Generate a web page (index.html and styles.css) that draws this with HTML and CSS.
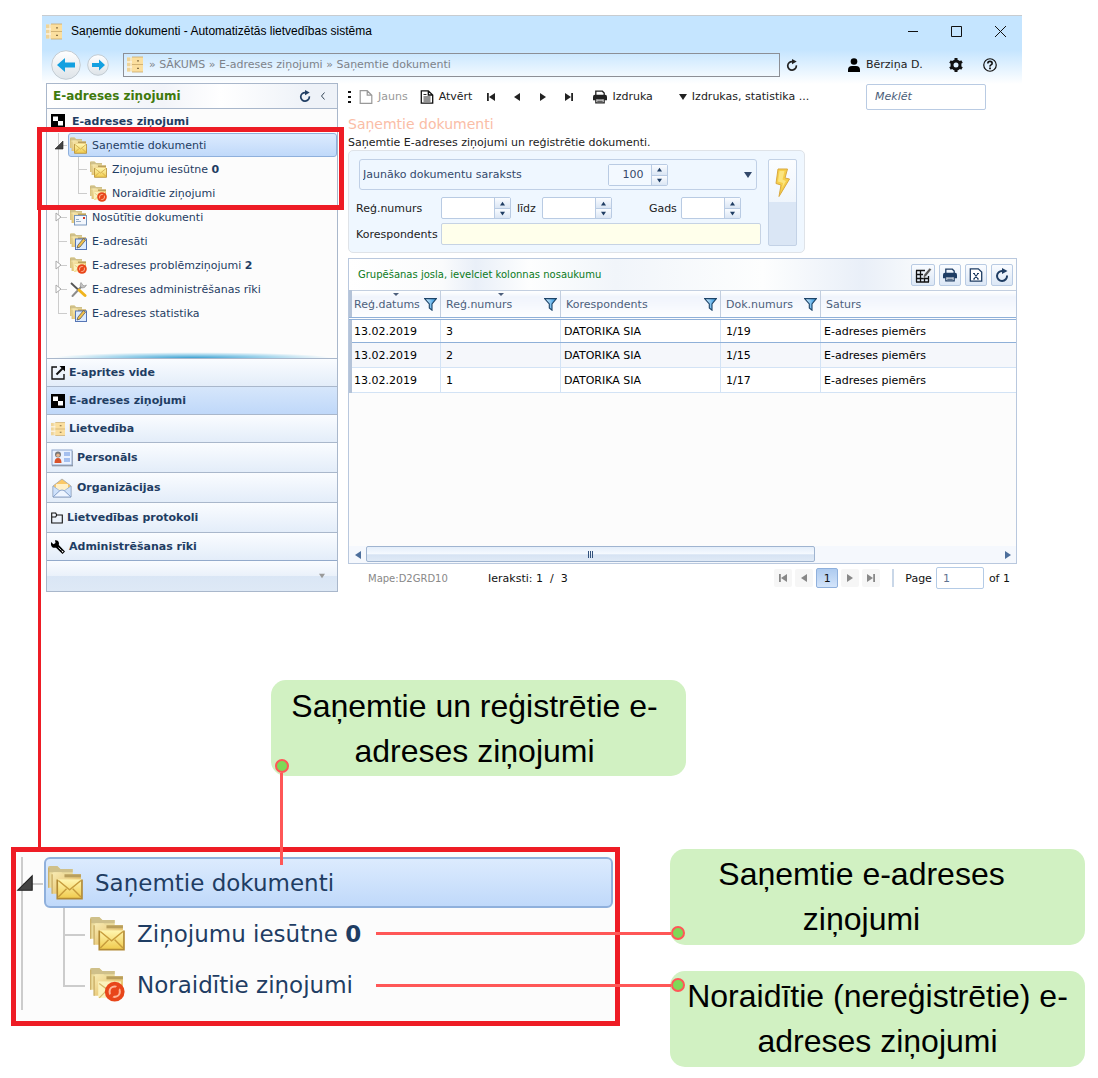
FILE: index.html
```html
<!DOCTYPE html>
<html lang="lv">
<head>
  <meta charset="UTF-8">
  <title>Saņemtie dokumenti - Automatizētās lietvedības sistēma</title>
  <link rel="stylesheet" href="styles.css">
</head>
<body>

<svg class="sprite" aria-hidden="true">
  <defs>
    <linearGradient id="gold" x1="0" y1="0" x2="1" y2="1">
      <stop offset="0" stop-color="#f8ebb4"/><stop offset="1" stop-color="#e0b452"/>
    </linearGradient>
    <linearGradient id="mail" x1="0" y1="0" x2="0" y2="1">
      <stop offset="0" stop-color="#fff6b0"/><stop offset="1" stop-color="#f0ca4c"/>
    </linearGradient>
    <linearGradient id="blue" x1="0" y1="0" x2="1" y2="0">
      <stop offset="0" stop-color="#e6f6ff"/><stop offset="1" stop-color="#1f8fe0"/>
    </linearGradient>
    <linearGradient id="disc" x1="0" y1="0" x2="0" y2="1">
      <stop offset="0" stop-color="#ffffff"/><stop offset="1" stop-color="#dde3e8"/>
    </linearGradient>
  </defs>
  <symbol id="i-cabinet" viewBox="0 0 16 16">
    <path d="M0 1h6v14H0z" fill="#f6e6bf"/>
    <path d="M0 1h3v4H0zM0 6h3v4H0zM0 11h3v4H0z" fill="#eed49a"/>
    <path d="M5 .5h11v15H5z" fill="#fbdf9f"/>
    <path d="M0 5.500h5M0 10.500h5" stroke="#fffaf0"/>
    <path d="M5 .5h11M5 8h11M5 15.500h11" stroke="#c9a76a" stroke-width=".8"/>
    <path d="M10 4.300h2M10 11.800h2" stroke="#8a7346" stroke-width="1.200"/>
  </symbol>
  <symbol id="i-folder" viewBox="0 0 17 17">
    <path d="M0 1.500Q0 .5 1 .5h3.500L6 2h6v9H0z" fill="#ecdc9c"/>
    <path d="M0 2.500v-1Q0 .5 1 .5h3.500L6 2h6v1.500H0z" fill="#cfc08a"/>
    <path d="M2 4.500q0-1 1-1h3.500l1 1H16V14H2z" fill="url(#gold)"/>
    <path d="M8 4.500h8V6H8z" fill="#b99f5c"/>
    <path d="M.3 11V1.500M2 14V4.500" stroke="#cdb26a" stroke-width=".7"/>
  </symbol>
  <symbol id="i-folder-mail" viewBox="0 0 17 17">
    <use href="#i-folder"/>
    <rect x="4.500" y="7" width="12" height="9.300" fill="url(#mail)"/>
    <path d="M4.500 7v9.300h12V7" fill="none" stroke="#b28a35" stroke-width=".8"/>
    <path d="M5 7.500l5.500 4.500 5.500-4.500M5 15.500l4-4M16 15.500l-4-4" fill="none" stroke="#c79c3c" stroke-width=".7"/>
  </symbol>
  <symbol id="i-folder-block" viewBox="0 0 17 17">
    <use href="#i-folder"/>
    <path d="M4 7h11v8H4z" fill="#fbf2bd"/>
    <path d="M4.500 8l4 3-4 4" fill="none" stroke="#d5b768" stroke-width=".6"/>
    <circle cx="12" cy="12" r="4.800" fill="#e8461a"/>
    <circle cx="12" cy="12" r="2.500" fill="none" stroke="#ffb596" stroke-width="1"/>
    <path d="M14 9.500L10 14.500" stroke="#e8461a" stroke-width="1.800"/>
  </symbol>
  <symbol id="i-folder-sent" viewBox="0 0 17 17">
    <use href="#i-folder"/>
    <rect x="4.500" y="6.500" width="12" height="9.500" fill="#f3f7fd" stroke="#6f8fb8" stroke-width=".9"/>
    <path d="M6 12.500h5M6 10.500h3" stroke="#8099b8" stroke-width=".8"/>
    <rect x="13" y="8" width="2" height="2" fill="#cf3a2a"/>
  </symbol>
  <symbol id="i-folder-edit" viewBox="0 0 17 17">
    <use href="#i-folder"/>
    <rect x="5.500" y="6" width="11" height="10.500" fill="#dcebff" stroke="#5575b5" stroke-width="1"/>
    <path d="M7 15l1-3 5.500-6.500 2 1.700L10 14z" fill="#f3c14a" stroke="#5b5b5b" stroke-width=".8"/>
  </symbol>
  <symbol id="i-tools" viewBox="0 0 17 17">
    <path d="M2.500 15L12 5" stroke="#8d8d8d" stroke-width="2" stroke-linecap="round"/>
    <path d="M11 1.500q-2 4 1 5.500 3 .5 4.500-3l-2.500 1-1.500-1.500z" fill="#c2c2c2" stroke="#8a8a8a" stroke-width=".6"/>
    <path d="M1 2l7 6.500" stroke="#555" stroke-width="1.800"/>
    <path d="M9 9l6 5.500" stroke="#f0b41e" stroke-width="3" stroke-linecap="round"/>
  </symbol>
  <symbol id="i-squares" viewBox="0 0 14 14">
    <path d="M0 0h14v14H0z"/>
    <path d="M2 2.500h5v4.500H2zM7 7h5v4.500H7z" fill="#fff"/>
  </symbol>
  <symbol id="i-refresh" viewBox="0 0 14 14">
    <path d="M12 7.500A5 5 0 1 1 7.500 3" fill="none" stroke="currentColor" stroke-width="2"/>
    <path d="M7 0l5.500 3L7 6z" fill="currentColor"/>
  </symbol>
  <symbol id="i-out" viewBox="0 0 14 14">
    <path d="M6 1H1v12h12V8" fill="none" stroke="#111" stroke-width="1.400"/>
    <path d="M8.500 0H14v5.500z"/><path d="M5.500 8.500L12 2" stroke="#111" stroke-width="2"/>
  </symbol>
  <symbol id="i-card" viewBox="0 0 22 18">
    <rect x="1" y="1" width="20" height="15" fill="#eaf2ff" stroke="#8ea6cc"/>
    <path d="M1 16.800h21V2" fill="none" stroke="#7c8696"/>
    <circle cx="7" cy="5.500" r="3" fill="#777"/><circle cx="7" cy="6.200" r="1.800" fill="#e6b48d"/>
    <path d="M3.500 14q0-5 3.500-5t3.500 5z" fill="#d8532a"/>
    <path d="M13 4h6M13 6h6M13 10h6M13 12h6" stroke="#8fb0ea" stroke-width="1.400"/>
  </symbol>
  <symbol id="i-letter" viewBox="0 0 20 20">
    <path d="M1 8l9-7 9 7v11H1z" fill="#fbc866" stroke="#a7a7a7" stroke-width=".8"/>
    <path d="M4 6h12v8H4z" fill="#fff0c8"/>
    <path d="M1 8l7 5L1 19zM19 8l-7 5 7 6z" fill="#cfe2fb" stroke="#8aa6d0" stroke-width=".7"/>
    <path d="M1 19l7-6.500q2-1 4 0L19 19z" fill="#eef5ff" stroke="#7f9cc8" stroke-width=".9"/>
  </symbol>
  <symbol id="i-dir" viewBox="0 0 12 12">
    <path d="M.7 11V1h4l1 2h5.600v8zM.7 5h4l1-2" fill="none" stroke="#111" stroke-width="1.100"/>
  </symbol>
  <symbol id="i-wrench" viewBox="0 0 14 14">
    <path d="M0 2l2.500 2.300L4.500 3 4 .3q3.500-.5 4 3L7.800 5 14 11.500 11.500 14 5 7.700Q1 8.500 0 5z"/>
    <circle cx="11.600" cy="11.600" r=".8" fill="#fff"/>
    <path d="M7.500 7.500l3 3" stroke="#fff" stroke-width=".8"/>
  </symbol>
  <symbol id="i-page" viewBox="0 0 13 14">
    <path d="M.7.700h7l4.600 4.500v8.100H.7zM7.700.7v4.500h4.600" fill="none" stroke="currentColor" stroke-width="1.200"/>
  </symbol>
  <symbol id="i-doc" viewBox="0 0 13 14">
    <path d="M.8.800h7l4.400 4.200v8.200H.8zM7.800.8V5h4.400" fill="none" stroke="#111" stroke-width="1.300"/>
    <path d="M3 4.500h3M3 7h7M3 9h7M3 11h7" stroke="#111" stroke-width=".9"/>
  </symbol>
  <symbol id="i-print" viewBox="0 0 15 14">
    <path d="M3 5V.8h7l2 2V5" fill="none" stroke="currentColor" stroke-width="1.400"/>
    <path d="M0 7q0-2.500 2-2.500h11q2 0 2 2.500v3.500H0z" fill="currentColor"/>
    <path d="M3 8.700h9v4.600H3z" fill="#fff" stroke="currentColor" stroke-width="1.300"/>
    <path d="M4.500 10.200h6M4.500 11.800h6" stroke="currentColor" stroke-width=".8"/>
  </symbol>
  <symbol id="i-prev" viewBox="0 0 8 8"><path d="M7 0v8L1 4z" fill="currentColor"/></symbol>
  <symbol id="i-next" viewBox="0 0 8 8"><path d="M1 0v8l6-4z" fill="currentColor"/></symbol>
  <symbol id="i-first" viewBox="0 0 8 8"><path d="M0 0h1.800v8H0zM8 0v8L2 4z" fill="currentColor"/></symbol>
  <symbol id="i-last" viewBox="0 0 8 8"><path d="M6.200 0H8v8H6.200zM0 0v8l6-4z" fill="currentColor"/></symbol>
  <symbol id="i-down" viewBox="0 0 8 8"><path d="M0 1h8L4 7z" fill="currentColor"/></symbol>
  <symbol id="i-up" viewBox="0 0 8 8"><path d="M0 7h8L4 1z" fill="currentColor"/></symbol>
  <symbol id="i-open" viewBox="0 0 10 10"><path d="M1 9l8-8v8z" fill="#444" stroke="#222" stroke-width=".6"/></symbol>
  <symbol id="i-closed" viewBox="0 0 10 10"><path d="M2 1l5 4-5 4z" fill="#fff" stroke="#aaa"/></symbol>
  <symbol id="i-user" viewBox="0 0 12 14">
    <circle cx="6" cy="3.500" r="3.300"/><path d="M0 14v-2q0-4 4-4h4q4 0 4 4v2z"/>
  </symbol>
  <symbol id="i-gear" viewBox="0 0 14 14">
    <circle cx="7" cy="7" r="4" fill="none" stroke="#111" stroke-width="3"/>
    <path d="M7 0v3M7 11v3M1 3.500l2.500 1.500M10.500 9l2.500 1.500M1 10.500L3.500 9M10.500 5L13 3.500" stroke="#111" stroke-width="3"/>
  </symbol>
  <symbol id="i-help" viewBox="0 0 15 15">
    <circle cx="7.500" cy="7.500" r="6.700" fill="none" stroke="#111" stroke-width="1.300"/>
    <path d="M5.200 5.800q0-2.200 2.300-2.200t2.300 2q0 1.200-1.200 1.800T7.500 9.200" fill="none" stroke="#111" stroke-width="1.700"/>
    <path d="M6.600 10.300h1.800V12H6.600z"/>
  </symbol>
  <symbol id="i-filter" viewBox="0 0 13 13">
    <path d="M.6.600h11.800L8 6v6.200L5.300 10V6z" fill="url(#blue)" stroke="#1d4468" stroke-width="1.100"/>
  </symbol>
  <symbol id="i-gridedit" viewBox="0 0 17 16">
    <path d="M1 3.500h9M1 7.500h7M1 11.500h13M1 15h13M1.500 3.500V15M5.500 3.500V15M9.500 10v5M13.500 9v6" fill="none" stroke="#111" stroke-width="1.300"/>
    <path d="M8 11l1-3.500L14.500 1l2 1.600L11 9.500z" fill="#555" stroke="#fff" stroke-width=".5"/>
  </symbol>
  <symbol id="i-excel" viewBox="0 0 13 14">
    <path d="M.8.800h8l3.400 3.200v9.200H.8z" fill="#fff" stroke="#1f3d63" stroke-width="1.300"/>
    <path d="M4.500 5.500l4 5.500M8.500 5.500l-4 5.500M3.500 5.500h2M7.500 5.500h2M3.500 11h2M7.500 11h2" fill="none" stroke="#1f3d63" stroke-width="1.100"/>
  </symbol>
  <symbol id="i-bolt" viewBox="0 0 15 29">
    <path d="M3 1h9.500L10 10l4.500 1L4 28.500 6 17l-5-1.500z" fill="#f6cf4a" stroke="#d9a941"/>
    <path d="M4.500 3h5L7.500 11.500 11 13l-4 7 1-5-5-1.500z" fill="#fbe580"/>
  </symbol>
  <symbol id="i-back" viewBox="0 0 30 30">
    <circle cx="15" cy="15" r="14.300" fill="url(#disc)" stroke="#c3ccd3"/>
    <path d="M6 15l8-7v4.500h10v5H14V22z" fill="#12a0e0"/>
  </symbol>
  <symbol id="i-forward" viewBox="0 0 22 22">
    <circle cx="11" cy="11" r="10.300" fill="url(#disc)" stroke="#c3ccd3"/>
    <path d="M18 11l-6-5.500V9H5v4h7v3.500z" fill="#12a0e0"/>
  </symbol>
</svg>

<div class="page">
  <div class="window">
    <header class="titlebar">
      <svg class="ico-cabinet"><use href="#i-cabinet"/></svg>
      <span class="window-title">Saņemtie dokumenti - Automatizētās lietvedības sistēma</span>
      <div class="window-buttons">
        <button aria-label="Minimizēt"><svg viewBox="0 0 11 11"><path d="M1 5.500h10" stroke="#111"/></svg></button>
        <button aria-label="Maksimizēt"><svg viewBox="0 0 11 11"><path d="M.5.500h10v10H.5z" fill="none" stroke="#111"/></svg></button>
        <button aria-label="Aizvērt"><svg viewBox="0 0 11 11"><path d="M0 0l11 11M11 0L0 11" stroke="#111"/></svg></button>
      </div>
    </header>

    <div class="navbar">
      <button aria-label="Atpakaļ"><svg class="ico-back"><use href="#i-back"/></svg></button>
      <button aria-label="Uz priekšu"><svg class="ico-forward"><use href="#i-forward"/></svg></button>
      <nav class="address">
        <svg class="ico-cabinet"><use href="#i-cabinet"/></svg>
        <span>» <a href="#">SĀKUMS</a> » <a href="#">E-adreses ziņojumi</a> » <a href="#">Saņemtie dokumenti</a></span>
      </nav>
      <button aria-label="Atjaunot"><svg class="ico-12"><use href="#i-refresh"/></svg></button>
      <div class="user-area">
        <a href="#" class="user"><svg class="ico-user"><use href="#i-user"/></svg>Bērziņa D.</a>
        <button class="settings" aria-label="Iestatījumi"><svg class="ico-14"><use href="#i-gear"/></svg></button>
        <button aria-label="Palīdzība"><svg class="ico-14"><use href="#i-help"/></svg></button>
      </div>
    </div>

    <div class="content">
      <aside class="sidebar">
        <div class="side-header">
          <h2>E-adreses ziņojumi</h2>
          <button aria-label="Atjaunot koku"><svg class="ico-12"><use href="#i-refresh"/></svg></button>
          <button aria-label="Sakļaut"><svg class="ico-8" viewBox="0 0 8 8"><path d="M5.500.500L2.500 4l3 3.500" fill="none" stroke="#345"/></svg></button>
        </div>

        <div class="side-tree">
          <a href="#" class="tree-root"><svg class="ico-14"><use href="#i-squares"/></svg>E-adreses ziņojumi</a>
          <ul class="tree">
            <li>
              <button class="expander" aria-label="Sakļaut zaru"><svg><use href="#i-open"/></svg></button>
              <a href="#" class="selected"><svg><use href="#i-folder-mail"/></svg>Saņemtie dokumenti</a>
              <ul>
                <li><a href="#"><svg><use href="#i-folder-mail"/></svg><span>Ziņojumu iesūtne <b>0</b></span></a></li>
                <li><a href="#"><svg><use href="#i-folder-block"/></svg>Noraidītie ziņojumi</a></li>
              </ul>
            </li>
            <li>
              <button class="expander" aria-label="Izvērst zaru"><svg><use href="#i-closed"/></svg></button>
              <a href="#"><svg><use href="#i-folder-sent"/></svg>Nosūtītie dokumenti</a>
            </li>
            <li><a href="#"><svg><use href="#i-folder-edit"/></svg>E-adresāti</a></li>
            <li>
              <button class="expander" aria-label="Izvērst zaru"><svg><use href="#i-closed"/></svg></button>
              <a href="#"><svg><use href="#i-folder-block"/></svg><span>E-adreses problēmziņojumi <b>2</b></span></a>
            </li>
            <li>
              <button class="expander" aria-label="Izvērst zaru"><svg><use href="#i-closed"/></svg></button>
              <a href="#"><svg><use href="#i-tools"/></svg>E-adreses administrēšanas rīki</a>
            </li>
            <li><a href="#"><svg><use href="#i-folder-edit"/></svg>E-adreses statistika</a></li>
          </ul>
          <div class="tree-frame"></div>
        </div>

        <nav class="side-nav">
          <a href="#"><svg class="ico-14"><use href="#i-out"/></svg>E-aprites vide</a>
          <a href="#" class="active"><svg class="ico-14"><use href="#i-squares"/></svg>E-adreses ziņojumi</a>
          <a href="#"><svg class="ico-14"><use href="#i-cabinet"/></svg>Lietvedība</a>
          <a href="#" class="tall"><svg class="ico-22"><use href="#i-card"/></svg>Personāls</a>
          <a href="#" class="tall"><svg class="ico-22"><use href="#i-letter"/></svg>Organizācijas</a>
          <a href="#" class="tall"><svg class="ico-12"><use href="#i-dir"/></svg>Lietvedības protokoli</a>
          <a href="#"><svg class="ico-14"><use href="#i-wrench"/></svg>Administrēšanas rīki</a>
        </nav>
        <div class="side-footer">
          <button aria-label="Vairāk"><svg class="ico-6"><use href="#i-down"/></svg></button>
        </div>
      </aside>

      <main class="main">
        <div class="toolbar">
          <span class="grip"></span>
          <button class="tool-new" disabled><svg class="ico-14"><use href="#i-page"/></svg>Jauns</button>
          <button class="tool-open"><svg class="ico-14"><use href="#i-doc"/></svg>Atvērt</button>
          <div class="record-nav">
            <button aria-label="Pirmais"><svg class="ico-8"><use href="#i-first"/></svg></button>
            <button aria-label="Iepriekšējais"><svg class="ico-8"><use href="#i-prev"/></svg></button>
            <button aria-label="Nākamais"><svg class="ico-8"><use href="#i-next"/></svg></button>
            <button aria-label="Pēdējais"><svg class="ico-8"><use href="#i-last"/></svg></button>
          </div>
          <button class="tool-print"><svg class="ico-14"><use href="#i-print"/></svg>Izdruka</button>
          <button class="tool-reports"><svg class="ico-8"><use href="#i-down"/></svg>Izdrukas, statistika ...</button>
          <input class="search" type="text" placeholder="Meklēt" aria-label="Meklēt">
        </div>

        <h1>Saņemtie dokumenti</h1>
        <p class="subtitle">Saņemtie E-adreses ziņojumi un reģistrētie dokumenti.</p>

        <form class="filter">
          <div class="filter-fields">
            <div class="combo">
              <select aria-label="Saraksts"><option>Jaunāko dokumentu saraksts</option></select>
              <div class="spinner">
                <input type="text" value="100" aria-label="Skaits">
                <button type="button" aria-label="Vairāk"><svg><use href="#i-up"/></svg></button>
                <button type="button" aria-label="Mazāk"><svg><use href="#i-down"/></svg></button>
              </div>
              <svg class="ico-8"><use href="#i-down"/></svg>
            </div>
            <div class="field-row">
              <label class="lead" for="regFrom">Reģ.numurs</label>
              <div class="spinner">
                <input type="text" id="regFrom">
                <button type="button" aria-label="Vairāk"><svg><use href="#i-up"/></svg></button>
                <button type="button" aria-label="Mazāk"><svg><use href="#i-down"/></svg></button>
              </div>
              <label for="regTo">līdz</label>
              <div class="spinner">
                <input type="text" id="regTo">
                <button type="button" aria-label="Vairāk"><svg><use href="#i-up"/></svg></button>
                <button type="button" aria-label="Mazāk"><svg><use href="#i-down"/></svg></button>
              </div>
              <label class="year" for="year">Gads</label>
              <div class="spinner narrow">
                <input type="text" id="year">
                <button type="button" aria-label="Vairāk"><svg><use href="#i-up"/></svg></button>
                <button type="button" aria-label="Mazāk"><svg><use href="#i-down"/></svg></button>
              </div>
            </div>
            <div class="field-row">
              <label class="lead" for="corr">Korespondents</label>
              <input type="text" id="corr" class="corr">
            </div>
          </div>
          <button class="run" aria-label="Atlasīt"><svg><use href="#i-bolt"/></svg></button>
        </form>

        <section class="grid">
          <div class="group-bar">
            <span>Grupēšanas josla, ievelciet kolonnas nosaukumu</span>
            <button aria-label="Kolonnas"><svg><use href="#i-gridedit"/></svg></button>
            <button aria-label="Drukāt"><svg><use href="#i-print"/></svg></button>
            <button aria-label="Excel"><svg><use href="#i-excel"/></svg></button>
            <button aria-label="Atjaunot"><svg><use href="#i-refresh"/></svg></button>
          </div>
          <table>
            <colgroup>
              <col class="c-date"><col class="c-reg"><col class="c-corr"><col class="c-doc"><col>
            </colgroup>
            <thead>
              <tr>
                <th class="sorted"><div>Reģ.datums<svg><use href="#i-filter"/></svg></div></th>
                <th class="sorted"><div>Reģ.numurs<svg><use href="#i-filter"/></svg></div></th>
                <th><div>Korespondents<svg><use href="#i-filter"/></svg></div></th>
                <th><div>Dok.numurs<svg><use href="#i-filter"/></svg></div></th>
                <th><div>Saturs</div></th>
              </tr>
            </thead>
            <tbody>
              <tr class="current"><td>13.02.2019</td><td>3</td><td>DATORIKA SIA</td><td>1/19</td><td>E-adreses piemērs</td></tr>
              <tr class="alt"><td>13.02.2019</td><td>2</td><td>DATORIKA SIA</td><td>1/15</td><td>E-adreses piemērs</td></tr>
              <tr><td>13.02.2019</td><td>1</td><td>DATORIKA SIA</td><td>1/17</td><td>E-adreses piemērs</td></tr>
            </tbody>
          </table>
          <div class="scrollbar">
            <button aria-label="Pa kreisi"><svg class="ico-8"><use href="#i-prev"/></svg></button>
            <div class="track"><div class="thumb"><i></i></div></div>
            <button aria-label="Pa labi"><svg class="ico-8"><use href="#i-next"/></svg></button>
          </div>
        </section>

        <footer class="pager">
          <span class="folder-code">Mape:D2GRD10</span>
          <span class="records">Ieraksti: 1&nbsp; /&nbsp; 3</span>
          <div class="pages">
            <button aria-label="Pirmā lapa"><svg class="ico-8"><use href="#i-first"/></svg></button>
            <button aria-label="Iepriekšējā lapa"><svg class="ico-8"><use href="#i-prev"/></svg></button>
            <button class="page-current">1</button>
            <button aria-label="Nākamā lapa"><svg class="ico-8"><use href="#i-next"/></svg></button>
            <button aria-label="Pēdējā lapa"><svg class="ico-8"><use href="#i-last"/></svg></button>
          </div>
          <label for="pageNo">Page</label>
          <input type="text" id="pageNo" value="1">
          <span>of 1</span>
        </footer>
      </main>
    </div>
  </div>

  <div class="callout callout-top">
    Saņemtie un reģistrētie e-adreses ziņojumi
    <span class="pin pin-down"></span>
  </div>

  <div class="closeup-row">
    <div class="closeup">
      <ul class="tree tree-large">
        <li>
          <button class="expander" aria-label="Sakļaut zaru"><svg><use href="#i-open"/></svg></button>
          <a href="#" class="selected"><svg><use href="#i-folder-mail"/></svg>Saņemtie dokumenti</a>
          <ul>
            <li><a href="#"><svg><use href="#i-folder-mail"/></svg><span>Ziņojumu iesūtne <b>0</b></span></a></li>
            <li><a href="#"><svg><use href="#i-folder-block"/></svg>Noraidītie ziņojumi</a></li>
          </ul>
        </li>
      </ul>
    </div>
    <div class="callouts">
      <div class="callout callout-inbox">
        Saņemtie e-adreses ziņojumi
        <span class="pin pin-left pin-low"></span>
      </div>
      <div class="callout">
        Noraidītie (nereģistrētie) e-adreses ziņojumi
        <span class="pin pin-left pin-high"></span>
      </div>
    </div>
  </div>
</div>

</body>
</html>
```
FILE: styles.css
```css
* {
  box-sizing: border-box;
}

body {
  margin: 0;
  background-color: #ffffff;
  color: #222;
  font-family: "DejaVu Sans", Verdana, sans-serif;
  font-size: 11px;
}

button, input, select {
  font: inherit;
  color: inherit;
  margin: 0;
}

button {
  display: inline-flex;
  align-items: center;
  justify-content: center;
  padding: 0;
  border: none;
  background: none;
  cursor: pointer;
}

a {
  color: inherit;
  text-decoration: none;
}

h1, h2, p, ul {
  margin: 0;
  padding: 0;
  font-weight: normal;
}

ul {
  list-style: none;
}

svg {
  flex: none;
  display: block;
}

.sprite {
  position: absolute;
  width: 0;
  height: 0;
}

.ico-6 { width: 6px; height: 6px; }
.ico-8 { width: 8px; height: 8px; }
.ico-12 { width: 12px; height: 12px; }
.ico-14 { width: 14px; height: 14px; }
.ico-22 { width: 22px; height: 20px; }
.ico-cabinet { width: 16px; height: 17px; }
.ico-user { width: 12px; height: 14px; }
.ico-back { width: 30px; height: 30px; }
.ico-forward { width: 22px; height: 22px; }

.page {
  padding: 15px 13px 10px 11px;
}

/* window */
.window {
  margin: 0 63px 88px 31px;
  background: linear-gradient(#c5e5ff 0, #c5e5ff 34px, #ffffff 68px);
  border-top: 1px solid #c8ccd0;
}

.titlebar {
  display: flex;
  align-items: center;
  height: 30px;
  padding: 0 16px 0 4px;
}

.window-title {
  margin-left: 9px;
  font: 12px "Liberation Sans", Arial, sans-serif;
  color: #000;
}

.window-buttons {
  display: flex;
  gap: 33px;
  margin-left: auto;
}

.window-buttons svg {
  width: 11px;
  height: 11px;
}

.navbar {
  display: flex;
  align-items: center;
  height: 37px;
  padding: 0 25px 0 9px;
}

.address {
  display: flex;
  flex: 1;
  align-items: center;
  gap: 6px;
  height: 24px;
  margin: 0 6px 0 14px;
  padding-left: 3px;
  border: 1px solid #8c8f96;
  color: #7d838a;
}

.navbar > button + button {
  margin-left: 6px;
}

.user-area {
  display: flex;
  align-items: center;
  width: 149px;
  margin-left: 50px;
}

.user {
  display: flex;
  align-items: center;
  gap: 6px;
}

.settings {
  margin: 0 20px 0 auto;
}

.content {
  display: grid;
  grid-template-columns: 292px 1fr;
  gap: 10px;
  padding: 0 4px;
}

/* left panel */
.sidebar {
  display: flex;
  flex-direction: column;
  border: 1px solid #a9b7cb;
  background-color: #fcfcfc;
  color: #1f3d63;
}

.side-header {
  display: flex;
  align-items: center;
  gap: 8px;
  height: 25px;
  padding: 0 10px 0 6px;
  border-bottom: 1px solid #a9b7cb;
  background: linear-gradient(90deg, #fff, #f2f4f9 40%, #fff 60%, #eef2f8 90%);
}

.side-header h2 {
  flex: 1;
  color: #3f7a0c;
  font-size: 12px;
  font-weight: bold;
}

.side-tree {
  position: relative;
  flex: 1;
  padding-bottom: 33px;
  background: radial-gradient(ellipse at 50% 100%, #3aa0d0 0, #a8d8ee 40%, #fcfcfc 68%) bottom / 100% 6px no-repeat;
}

.tree-root {
  display: flex;
  align-items: center;
  gap: 7px;
  height: 24px;
  padding-left: 4px;
  font-weight: bold;
}

.tree {
  --row: 24px;
  --half: 12px;
  --icon: 17px;
  --gap: 5px;
  --pad: 2px;
  --stem: 11px;
  --indent: 21px;
  --nest: 20px;
  --arrow: 10px;
  --line: 1px;
}

.tree-large {
  --row: 51px;
  --half: 26px;
  --icon: 35px;
  --gap: 12px;
  --pad: 4px;
  --stem: 5px;
  --indent: 28px;
  --nest: 42px;
  --arrow: 18px;
  --line: 2px;
  font-size: 23px;
  color: #1f3d63;
}

.tree li {
  position: relative;
}

.tree li::before {
  content: "";
  position: absolute;
  top: 0;
  bottom: 0;
  left: var(--stem);
  border-left: var(--line) solid #ccc;
}

.tree > li:last-child::before,
.tree ul li:last-child::before {
  bottom: auto;
  height: var(--half);
}

.tree-large > li:last-child::before {
  height: 100%;
}

.tree li::after {
  content: "";
  position: absolute;
  top: var(--half);
  left: var(--stem);
  width: 9px;
  border-top: var(--line) solid #ccc;
}

.tree-large li::after {
  width: 22px;
}

.tree ul {
  padding-left: var(--nest);
}

.tree a {
  position: relative;
  z-index: 1;
  display: flex;
  align-items: center;
  gap: var(--gap);
  height: var(--row);
  margin-left: var(--indent);
  padding-left: var(--pad);
}

.tree a svg {
  width: var(--icon);
  height: var(--icon);
}

.tree .selected {
  padding-left: calc(var(--pad) - 1px);
  border: 1px solid #8fb0dc;
  border-radius: 3px;
  background: linear-gradient(#dcebfe, #c0d9fa);
}

.tree-large .selected {
  border-width: 2px;
  border-radius: 6px;
  padding-left: 2px;
}

.expander {
  position: absolute;
  z-index: 1;
  left: calc(var(--stem) - 4px);
  height: var(--row);
}

.tree-large .expander {
  left: 0;
}

.expander svg {
  width: var(--arrow);
  height: var(--arrow);
}

.tree-frame {
  position: absolute;
  top: 18px;
  left: -10px;
  right: -7px;
  height: 83px;
  border: 5px solid #ee1c25;
  z-index: 2;
  pointer-events: none;
}

/* line that runs down to the close-up */
.tree-frame::after {
  content: "";
  position: absolute;
  top: 76px;
  left: -4px;
  height: 642px;
  border-left: 3px solid #ee1c25;
}

.side-nav a {
  display: flex;
  align-items: center;
  gap: 4px;
  height: 28px;
  padding-left: 4px;
  border-top: 1px solid #a9b7cb;
  background: linear-gradient(#fafcff, #e3edf9);
  font-weight: bold;
}

.side-nav .tall {
  height: 30px;
}

.side-nav .active {
  background: linear-gradient(#d6e6fb, #bfd8f9);
}

.side-footer {
  display: flex;
  justify-content: flex-end;
  height: 31px;
  padding-right: 12px;
  border-top: 1px solid #93aacb;
  background: linear-gradient(#fafcff, #eaf1fa 50%, #dae6f5 50%, #dee9f6);
  color: #999;
}

/* right side */
.main {
  display: flex;
  flex-direction: column;
  min-width: 0;
}

.toolbar {
  display: flex;
  align-items: center;
  height: 27px;
  padding-right: 32px;
}

.grip {
  width: 3px;
  height: 12px;
  margin-right: 8px;
  background: repeating-linear-gradient(#111 0, #111 2px, transparent 2px, transparent 5px);
}

.toolbar button {
  gap: 5px;
}

.tool-new {
  color: #999;
}

.toolbar .tool-open {
  margin-left: 12px;
}

.record-nav {
  display: flex;
  gap: 18px;
  margin: 0 20px 0 15px;
}

.toolbar .tool-reports {
  margin-left: 26px;
}

.toolbar .search {
  width: 120px;
  height: 26px;
  margin-left: auto;
  padding: 0 8px;
  border: 1px solid #b9cbe3;
  border-radius: 2px;
  background: #fff;
}

.search::placeholder {
  color: #4a5d78;
  font-style: italic;
  opacity: 1;
}

h1 {
  margin-top: 5px;
  font-size: 14px;
  line-height: 18px;
  color: #fabda6;
}

.subtitle {
  line-height: 14px;
  margin: 3px 0 0;
}

.filter {
  display: flex;
  gap: 7px;
  width: 457px;
  max-width: 100%;
  padding: 8px 7px 3px;
  border: 1px solid #dfe3e8;
  border-radius: 5px;
  background-color: #eff7ff;
}

.filter-fields {
  flex: 1;
}

.combo {
  display: grid;
  align-items: center;
  height: 31px;
  margin: 0 4px 7px 3px;
  border: 1px solid #c0d0e6;
  border-radius: 3px;
  color: #33496b;
}

.combo > * {
  grid-area: 1 / 1;
}

.combo > svg {
  justify-self: end;
  margin-right: 4px;
  pointer-events: none;
}

.combo select {
  appearance: none;
  height: 100%;
  padding: 0 3px;
  border: none;
  background: none;
}

.combo .spinner {
  margin-left: 248px;
  width: 60px;
}

.combo .spinner input {
  padding-left: 8px;
  text-align: center;
}

.spinner {
  display: grid;
  grid-template: 1fr 1fr / 1fr 15px;
  width: 70px;
  height: 22px;
  border: 1px solid #b9cbe3;
  border-radius: 2px;
  background-color: #fff;
}

.spinner input {
  grid-row: span 2;
  min-width: 0;
  padding: 0 2px;
  border: none;
  border-right: 1px solid #b9cbe3;
  background: none;
}

.combo .spinner input,
.combo .spinner {
  background-color: #f3f9ff;
}

.spinner button {
  grid-column: 2;
  background: linear-gradient(#fafcff, #dbe6f4);
  color: #1f3d63;
}

.spinner button + button {
  border-top: 1px solid #b9cbe3;
}

.spinner svg {
  width: 5px;
  height: 5px;
}

.field-row {
  display: flex;
  align-items: center;
  gap: 6px;
  margin-bottom: 4px;
}

.lead {
  width: 79px;
}

.narrow {
  width: 60px;
}

.year {
  margin-left: 31px;
}

.field-row .year + .spinner {
  margin-left: -2px;
}

.corr {
  flex: 1;
  height: 22px;
  border: 1px solid #c6d3e4;
  border-radius: 2px;
  background-color: #ffffeb;
}

.run {
  align-items: flex-start;
  width: 29px;
  height: 87px;
  padding-top: 8px;
  border: 1px solid #c3d2e6;
  border-radius: 2px;
  background: linear-gradient(#fbfdff, #eff5fc 50%, #dae6f5 50%);
}

.run svg {
  width: 15px;
  height: 29px;
}

/* documents */
.grid {
  display: flex;
  flex-direction: column;
  flex: 1;
  margin: 5px 1px 0 0;
  border: 1px solid #b9c8de;
  background-color: #fcfcfc;
}

.group-bar {
  display: flex;
  align-items: center;
  gap: 4px;
  height: 31px;
  padding: 0 3px 0 9px;
  background: linear-gradient(90deg, #fff, #fafbfc 14%, #e9eff8 19%, #fdfefe 27%, #f1f5fa 40%, #fdfefe 62%, #e9eff8 77%, #fcfdfd 88%);
}

.group-bar span {
  flex: 1;
  font-size: 10px;
  color: #0b7a1c;
}

.group-bar button {
  width: 22px;
  height: 22px;
  border: 1px solid #b9cbe3;
  border-radius: 2px;
  background: linear-gradient(#fafcff, #dce7f5);
  color: #1f3d63;
}

.group-bar button svg {
  width: 14px;
  height: 14px;
}

.group-bar button:first-of-type {
  width: 24px;
}

.group-bar button:first-of-type svg {
  width: 17px;
  height: 16px;
}

table {
  width: 100%;
  table-layout: fixed;
  border-collapse: collapse;
  border-left: 3px solid #b4c3d8;
  color: #000;
}

.c-date { width: 90px; }
.c-reg { width: 120px; }
.c-corr { width: 160px; }
.c-doc { width: 100px; }

th {
  height: 28px;
  padding: 0 3px 0 5px;
  border: 1px solid #c3cfe0;
  border-bottom: 3px double #8fb0d8;
  background: linear-gradient(#fff, #f0f4fc 20%, #fdfeff);
  color: #4d5f7c;
  font-weight: normal;
  text-align: left;
}

th:first-child {
  padding-left: 2px;
}

th div {
  position: relative;
  display: flex;
  justify-content: space-between;
  align-items: center;
}

th svg {
  width: 13px;
  height: 13px;
}

.sorted div::before {
  content: "";
  position: absolute;
  top: -5px;
  left: 47%;
  border: 3px solid transparent;
  border-top-color: #4d5f7c;
  border-bottom: none;
}

th:last-child, td:last-child {
  border-right: none;
}

td {
  height: 25px;
  padding: 0 3px;
  border: 1px solid #d3e3f5;
  background-color: #fff;
}

td:first-child {
  padding-left: 2px;
}

td:nth-child(2), td:nth-child(4) {
  padding-left: 5px;
}

.current td {
  height: 24px;
  border-bottom-color: #8fb0d8;
}

.alt td {
  border-top-color: #8fb0d8;
  background-color: #f5f7fb;
}

.scrollbar {
  display: flex;
  height: 17px;
  margin-top: auto;
  background-color: #f5f8fd;
  color: #4d6f9c;
}

.scrollbar button {
  width: 17px;
}

.track {
  flex: 1;
}

.thumb {
  display: flex;
  align-items: center;
  justify-content: center;
  width: 71%;
  height: 16px;
  border: 1px solid #9fb4d0;
  border-radius: 2px;
  background: linear-gradient(#e4eefa, #f6faff 50%, #d6e3f3 55%, #e0eaf6);
}

.thumb i {
  width: 5px;
  height: 7px;
  background: repeating-linear-gradient(90deg, #33527c 0, #33527c 1px, transparent 1px, transparent 2px);
}

.pager {
  display: flex;
  align-items: center;
  height: 28px;
  padding: 0 8px 0 20px;
  color: #111;
}

.folder-code {
  width: 120px;
  font-size: 10px;
  color: #888;
}

.pages {
  display: flex;
  gap: 3px;
  margin-left: auto;
  padding-right: 12px;
  border-right: 2px solid #c9d7e8;
}

.pages button {
  width: 18px;
  height: 18px;
  border-radius: 2px;
  background-color: #f6f6f6;
  color: #888;
}

.pages .page-current {
  width: 22px;
  height: 20px;
  margin: -1px 0;
  border: 1px solid #8fb0dc;
  background: linear-gradient(#aecbef, #d3e4fa);
  color: #111;
}

.pager label {
  margin: 0 4px 0 11px;
}

.pager input {
  width: 48px;
  height: 22px;
  margin-right: 5px;
  padding: 0 6px;
  border: 1px solid #b4cbe6;
  border-radius: 2px;
  color: #5f7391;
}

/* notes */
.callout {
  position: relative;
  min-height: 96px;
  padding: 3px 0;
  border-radius: 15px;
  background-color: #d1f1c2;
  color: #000;
  font: 32px/45px "Liberation Sans", Arial, sans-serif;
  text-align: center;
}

.callout-top {
  width: 415px;
  margin-left: 260px;
  padding: 4px 20px 2px 12px;
}

.callout-inbox {
  padding: 3px 60px 3px 28px;
}

.closeup-row {
  display: grid;
  grid-template-columns: 609fr 415fr;
  align-items: start;
  gap: 50px;
  margin-top: 71px;
}

.callouts {
  display: grid;
  gap: 26px;
  padding-top: 2px;
}

.closeup {
  position: relative;
  padding: 5px 2px 11px 0;
  border: 5px solid #ee1c25;
  background-color: #fcfcfc;
}

.pin {
  position: absolute;
  z-index: 3;
  width: 14px;
  height: 14px;
  border: 2px solid #ff5757;
  border-radius: 50%;
  background-color: #7ed957;
}

.pin::after {
  content: "";
  position: absolute;
  background-color: #ff5757;
}

.pin-down {
  left: 4px;
  top: 79px;
}

.pin-down::after {
  top: 12px;
  left: 3px;
  width: 3px;
  height: 92px;
}

.pin-left {
  left: 1px;
}

.pin-left::after {
  top: 4px;
  right: 12px;
  width: 295px;
  height: 3px;
}

.pin-low {
  top: 77px;
}

.pin-high {
  top: 7px;
}
```
